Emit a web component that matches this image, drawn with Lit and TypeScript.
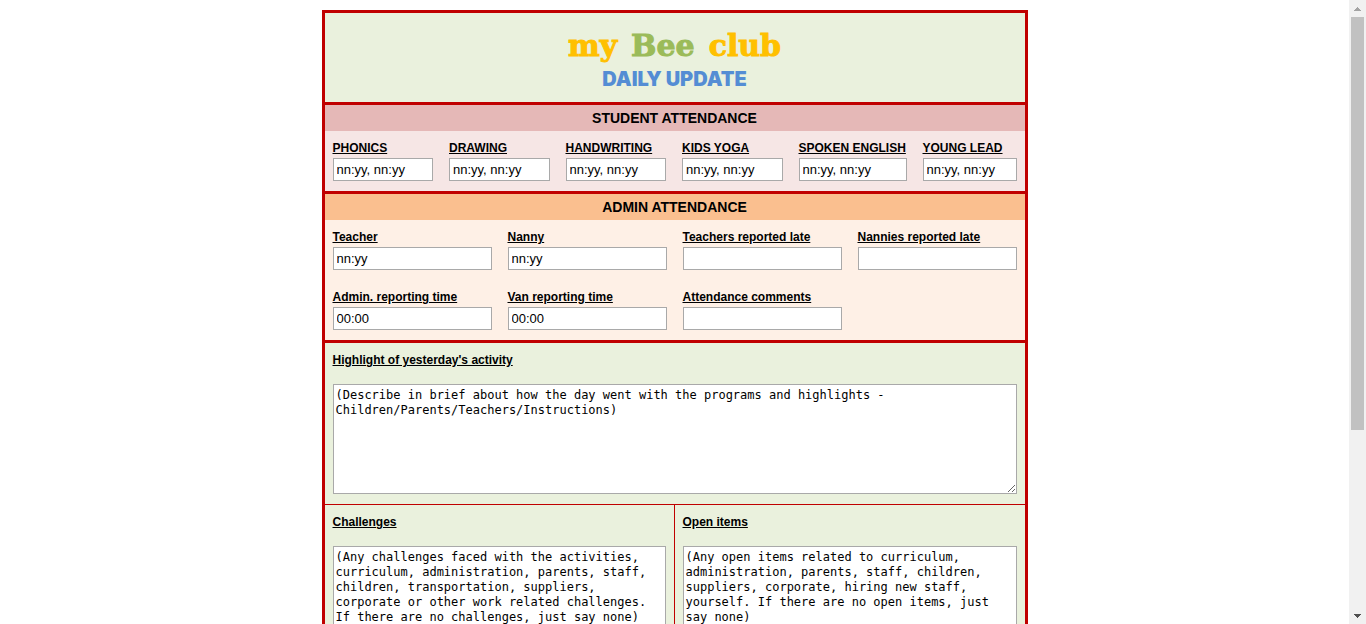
import { LitElement, html, css } from "lit";
import { customElement } from "lit/decorators.js";

interface Field {
  id: string;
  label: string;
  value: string;
}

const students: Field[] = [
  { id: "phonics", label: "PHONICS", value: "nn:yy, nn:yy" },
  { id: "drawing", label: "DRAWING", value: "nn:yy, nn:yy" },
  { id: "handwriting", label: "HANDWRITING", value: "nn:yy, nn:yy" },
  { id: "yoga", label: "KIDS YOGA", value: "nn:yy, nn:yy" },
  { id: "spoken", label: "SPOKEN ENGLISH", value: "nn:yy, nn:yy" },
  { id: "young", label: "YOUNG LEAD", value: "nn:yy, nn:yy" },
];

const admin: Field[] = [
  { id: "teacher", label: "Teacher", value: "nn:yy" },
  { id: "nanny", label: "Nanny", value: "nn:yy" },
  { id: "teachers-late", label: "Teachers reported late", value: "" },
  { id: "nannies-late", label: "Nannies reported late", value: "" },
  { id: "admin-time", label: "Admin. reporting time", value: "00:00" },
  { id: "van-time", label: "Van reporting time", value: "00:00" },
  { id: "comments", label: "Attendance comments", value: "" },
];

const highlight: Field = {
  id: "highlight",
  label: "Highlight of yesterday's activity",
  value:
    "(Describe in brief about how the day went with the programs and highlights - Children/Parents/Teachers/Instructions)",
};

const challenges: Field = {
  id: "challenges",
  label: "Challenges",
  value:
    "(Any challenges faced with the activities, curriculum, administration, parents, staff, children, transportation, suppliers, corporate or other work related challenges. If there are no challenges, just say none)",
};

const openItems: Field = {
  id: "open-items",
  label: "Open items",
  value:
    "(Any open items related to curriculum, administration, parents, staff, children, suppliers, corporate, hiring new staff, yourself. If there are no open items, just say none)",
};

@customElement("app-root")
export class AppRoot extends LitElement {
  static styles = css`
    :host {
      display: flex;
      height: 100vh;
      overflow: hidden;
      background: #fff;
      color: #000;
      font-family: "Liberation Sans", Arial, sans-serif;
      font-size: 12px;
    }
    * {
      box-sizing: border-box;
    }
    .page {
      flex: 1;
      min-width: 0;
      overflow: hidden;
      padding: 10px 8px;
    }
    .form {
      max-width: 706px;
      margin: 0 auto;
      border: 3px solid #c00000;
      background: #eaf1dd;
    }
    .banner {
      display: flex;
      flex-direction: column;
      align-items: center;
      gap: 2px;
      padding: 15px 8px 10px;
      border-bottom: 3px solid #c00000;
    }
    .brand {
      display: flex;
      gap: 14px;
      margin: 0;
      color: #ffc000;
      font: bold 30px/36px "DejaVu Serif", serif;
      -webkit-text-stroke: 1px currentColor;
    }
    .bee {
      color: #9bbb59;
    }
    .tagline {
      margin: 0;
      color: #548dd4;
      font: 900 20px/26px Inter, sans-serif;
    }
    .block {
      border-bottom: 3px solid #c00000;
    }
    .title {
      margin: 0;
      font-size: 14px;
      line-height: 26px;
      font-weight: bold;
      text-align: center;
    }
    .student {
      background: #f6e6e5;
    }
    .student .title {
      background: #e5b8b7;
    }
    .admin {
      background: #fef0e6;
    }
    .admin .title {
      background: #fabf8f;
    }
    .fields {
      display: grid;
      gap: 19px 16px;
      padding: 9px 8px 10px;
    }
    .student .fields {
      grid-template-columns: repeat(4, minmax(0, 1fr)) 108px 94px;
    }
    .admin .fields {
      grid-template-columns: repeat(4, minmax(0, 1fr));
    }
    .field {
      display: flex;
      flex-direction: column;
      gap: 1px;
      min-width: 0;
    }
    .label {
      align-self: flex-start;
      font-weight: bold;
      line-height: 17px;
      white-space: nowrap;
      text-decoration: underline;
    }
    .input {
      width: 100%;
      min-width: 0;
      height: 23px;
      margin: 0;
      padding: 0 3px;
      border: 1px solid #a9a9a9;
      border-radius: 0;
      background: #fff;
      color: #000;
      font: 13px "Liberation Sans", Arial, sans-serif;
    }
    .note {
      display: flex;
      flex-direction: column;
      gap: 15px;
      min-width: 0;
      padding: 9px 8px 10px;
    }
    .area {
      display: block;
      width: 100%;
      height: 110px;
      margin: 0;
      padding: 3px 2px;
      border: 1px solid #a9a9a9;
      border-radius: 0;
      background: #fff;
      color: #000;
      font: 12px/15px "DejaVu Sans Mono", monospace;
      overflow: auto;
      resize: both;
    }
    .pair {
      display: grid;
      grid-template-columns: repeat(2, minmax(0, 1fr));
      border-top: 1px solid #c00000;
    }
    .pair .note:first-child {
      border-right: 1px solid #c00000;
    }
    .scroll {
      display: flex;
      flex-direction: column;
      flex: 0 0 17px;
      background: #f1f1f1;
    }
    .arrow {
      display: block;
      width: 17px;
      height: 17px;
    }
    .track {
      flex: 1;
      padding: 0 2px;
    }
    .thumb {
      height: 70%;
      background: #c1c1c1;
    }
    .up {
      fill: #a3a3a3;
    }
    .down {
      fill: #505050;
    }
  `;

  private field(f: Field) {
    return html`<div class="field">
      <label class="label" for=${f.id}>${f.label}</label>
      <input class="input" id=${f.id} type="text" .value=${f.value} />
    </div>`;
  }

  private note(f: Field) {
    return html`<div class="note">
      <label class="label" for=${f.id}>${f.label}</label>
      <textarea class="area" id=${f.id} spellcheck="false" .value=${f.value}></textarea>
    </div>`;
  }

  render() {
    return html`
      <main class="page">
        <form class="form">
          <header class="banner">
            <h1 class="brand"><span>my</span><span class="bee">Bee</span><span>club</span></h1>
            <p class="tagline">DAILY UPDATE</p>
          </header>
          <section class="block student">
            <h2 class="title">STUDENT ATTENDANCE</h2>
            <div class="fields">${students.map((f) => this.field(f))}</div>
          </section>
          <section class="block admin">
            <h2 class="title">ADMIN ATTENDANCE</h2>
            <div class="fields">${admin.map((f) => this.field(f))}</div>
          </section>
          ${this.note(highlight)}
          <div class="pair">${this.note(challenges)}${this.note(openItems)}</div>
        </form>
      </main>
      <div class="scroll" aria-hidden="true">
        <svg class="arrow up" viewBox="0 0 17 17" shape-rendering="crispEdges">
          <path d="M8 7h1v1h1v1h1v1h1v1H5v-1h1V9h1V8h1z" />
        </svg>
        <div class="track"><div class="thumb"></div></div>
        <svg class="arrow down" viewBox="0 0 17 17" shape-rendering="crispEdges">
          <path d="M5 7h7v1h-1v1h-1v1H9v1H8v-1H7V9H6V8H5z" />
        </svg>
      </div>
    `;
  }
}
